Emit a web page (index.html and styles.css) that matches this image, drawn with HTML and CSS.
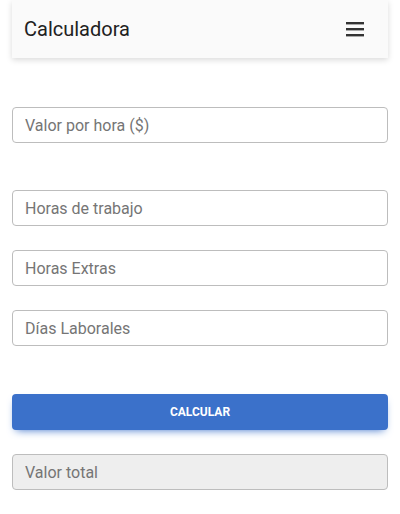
FILE: index.html
```html
<!DOCTYPE html>
<html lang="es">
<head>
<meta charset="utf-8">
<link rel="stylesheet" href="styles.css">
</head>
<body>
<header class="bar">
  <span class="title">Calculadora</span>
  <button class="menu" aria-label="menu">
    <svg width="18" height="16" viewBox="0 0 18 16"><rect x="0" y="1" width="18" height="2.4" fill="#333"/><rect x="0" y="7" width="18" height="2.4" fill="#333"/><rect x="0" y="13" width="18" height="2.4" fill="#333"/></svg>
  </button>
</header>
<main class="form">
  <input class="field" type="text" placeholder="Valor por hora ($)">
  <div class="group">
    <input class="field" type="text" placeholder="Horas de trabajo">
    <input class="field" type="text" placeholder="Horas Extras">
    <input class="field" type="text" placeholder="Días Laborales">
  </div>
  <button class="calc">CALCULAR</button>
  <input class="field total" type="text" placeholder="Valor total" disabled>
</main>
</body>
</html>
```
FILE: styles.css
```css
html, body { margin: 0; padding: 0; background: #fff; }
body { font-family: Roboto, "Noto Sans", sans-serif; }
.bar {
  margin: 0 12px;
  height: 58px;
  box-sizing: border-box;
  padding: 0 12px;
  display: flex;
  align-items: center;
  justify-content: space-between;
  background: #fafafa;
  box-shadow: 0 2px 6px rgba(0,0,0,0.15);
}
.title { font-size: 20px; color: #212121; }
.menu {
  border: 0; background: transparent; padding: 0; margin-right: 12px;
  display: flex; width: 18px; height: 16px;
}
.form {
  padding: 49px 12px 0;
  display: flex;
  flex-direction: column;
}
.group {
  margin-top: 47px;
  display: flex;
  flex-direction: column;
  gap: 24px;
}
.field {
  box-sizing: border-box;
  height: 36px;
  width: 100%;
  margin: 0;
  border: 1px solid #bdbdbd;
  border-radius: 4px;
  padding: 0 12px;
  font-family: Roboto, sans-serif;
  font-size: 16px;
  color: #212121;
  background: #fff;
}
.field::placeholder { color: #757575; opacity: 1; }
.calc {
  margin-top: 48px;
  height: 36px;
  border: 0;
  border-radius: 4px;
  background: #3b71ca;
  color: #fff;
  font-family: Roboto, sans-serif;
  font-weight: 700;
  font-size: 12px;
  box-shadow: 0 4px 9px -4px #3b71ca;
}
.total {
  margin-top: 24px;
  background: #eeeeee;
}
```
